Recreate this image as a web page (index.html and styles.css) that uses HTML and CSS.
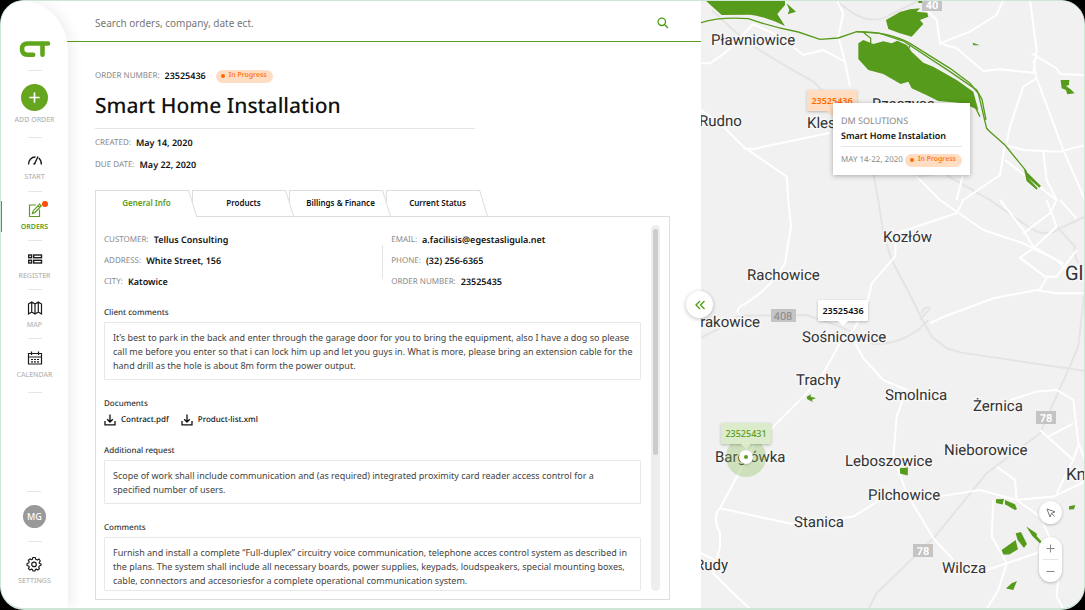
FILE: index.html
```html
<!DOCTYPE html>
<html lang="en">
<head>
<meta charset="utf-8">
<title>Smart Home Installation</title>
<link rel="stylesheet" href="styles.css">
</head>
<body>
<div class="shell">
  <aside class="sidebar">
    <a class="logo" href="#" aria-label="Home">
      <svg width="32" height="18" viewBox="0 0 32 18" fill="none" stroke="#5fa61c" stroke-width="4.600" stroke-linecap="round" stroke-linejoin="round"><path d="M29 3.500H8.500Q3 3.500 3 9T8.500 14.700H14.200"/><path d="M23.500 4V14.700"/></svg>
    </a>
    <button class="add" type="button"><span class="add-disc"><svg width="27" height="27" viewBox="0 0 27 27" stroke="#fff" stroke-width="1.700" stroke-linecap="round"><path d="M13.500 9v9M9 13.500h9"/></svg></span>Add order</button>
    <nav class="nav">
      <a class="nav-item nav-start" href="#"><svg width="16" height="16" viewBox="0 0 16 16" fill="none" stroke="#1c1c1c" stroke-width="1.400"><path d="M1.500 12.500C1.500 8.500 4 5 8.500 5M11.800 6C13.500 7.500 14.400 9.500 14.400 12.500M7.500 12L11 4.500"/><circle cx="7.300" cy="11.800" r="1" fill="#1c1c1c" stroke="none"/></svg>Start</a>
      <a class="nav-item is-active" href="#"><svg width="16" height="16" viewBox="0 0 16 16" fill="none" stroke="#5a9c1b" stroke-width="1.200"><path d="M9 3H2.500V14.500H12.500V7.500"/><path d="M5.500 11.500L6.300 8.700L12.500 2L14.300 3.700L8 10.500ZM11 3.700l1.800 1.700"/></svg>Orders<span class="dot"></span></a>
      <a class="nav-item" href="#"><svg width="16" height="16" viewBox="0 0 16 16" fill="none" stroke="#1c1c1c" stroke-width="1.400"><rect x="1.700" y="4" width="2.900" height="2.700"/><rect x="6.700" y="4" width="7.800" height="2.700"/><rect x="1.700" y="9.300" width="2.900" height="2.700"/><rect x="6.700" y="9.300" width="7.800" height="2.700"/></svg>Register</a>
      <a class="nav-item" href="#"><svg width="16" height="16" viewBox="0 0 16 16" fill="none" stroke="#1c1c1c" stroke-width="1.200"><path d="M1.500 4L4.700 2L8 4L11.300 2L14.500 4V14L11.300 12L8 14L4.700 12L1.500 14ZM4.700 2V12M8 4V14M11.300 2V12"/></svg>Map</a>
      <a class="nav-item nav-last" href="#"><svg width="16" height="16" viewBox="0 0 16 16" fill="none" stroke="#1c1c1c" stroke-width="1.200"><path d="M1.500 3.500H14.500V14H1.500ZM1.500 7H14.500M4.500 1.500V5M11.500 1.500V5M4 9.500H6M7 9.500H9M10 9.500H12M4 11.800H6M7 11.800H9M10 11.800H12"/></svg>Calendar</a>
    </nav>
    <div class="side-foot">
      <button class="avatar" type="button">MG</button>
      <a class="nav-item nav-settings" href="#"><svg width="16" height="16" viewBox="0 0 16 16" fill="none" stroke="#1c1c1c" stroke-width="1.200" stroke-linejoin="round"><path d="M6.800 1.500H9.200L9.700 3.300L11.400 4L13 3L14.300 5L13.200 6.500L13.600 7.400L15 8V9.300L13.300 10L12.800 11.200L13.400 12.800L11.700 14L10.300 13.100L9.400 13.500L9 15H7L6.500 13.500L5.500 13.100L4 14L2.400 12.600L3.200 11.100L2.700 10L1 9.500V7.500L2.700 7L3.200 5.800L2.400 4.200L4 2.900L5.500 3.700L6.400 3.300Z"/><circle cx="8" cy="8.400" r="2.300"/></svg>Settings</a>
    </div>
  </aside>

  <main class="main">
    <form class="search">
      <input class="search-input" type="search" aria-label="Search" placeholder="Search orders, company, date ect.">
      <button class="search-btn" type="submit" aria-label="Search"><svg width="12" height="12" viewBox="0 0 12 12" fill="none" stroke="#4c9a12" stroke-width="1.300"><circle cx="4.800" cy="4.800" r="3.700"/><path d="M7.500 7.500L11 11"/></svg></button>
    </form>
    <div class="content">
      <header class="order-head">
        <div class="field"><span class="key">Order number:</span><b class="val">23525436</b><span class="badge">In Progress</span></div>
        <h1 class="title">Smart Home Installation</h1>
        <div class="dates">
          <div class="field"><span class="key">Created:</span><b class="val">May 14, 2020</b></div>
          <div class="field"><span class="key">Due date:</span><b class="val">May 22, 2020</b></div>
        </div>
      </header>
      <div class="tabs" role="tablist">
        <button class="tab is-current" role="tab" type="button">General Info</button>
        <button class="tab" role="tab" type="button">Products</button>
        <button class="tab" role="tab" type="button">Billings &amp; Finance</button>
        <button class="tab" role="tab" type="button">Current Status</button>
      </div>
      <section class="panel">
        <div class="panel-body">
          <div class="facts">
            <div class="facts-col">
              <div class="field"><span class="key">Customer:</span><b class="val">Tellus Consulting</b></div>
              <div class="field"><span class="key">Address:</span><b class="val">White Street, 156</b></div>
              <div class="field"><span class="key">City:</span><b class="val">Katowice</b></div>
            </div>
            <div class="facts-col facts-second">
              <div class="field"><span class="key">Email:</span><b class="val">a.facilisis@egestasligula.net</b></div>
              <div class="field"><span class="key">Phone:</span><b class="val">(32) 256-6365</b></div>
              <div class="field"><span class="key">Order number:</span><b class="val">23525435</b></div>
            </div>
          </div>
          <div class="group">
            <label class="heading" for="client">Client comments</label>
            <textarea class="note note-full" id="client" rows="3" readonly>It’s best to park in the back and enter through the garage door for you to bring the equipment, also I have a dog so please call me before you enter so that i can lock him up and let you guys in. What is more, please bring an extension cable for the hand drill as the hole is about 8m form the power output.</textarea>
          </div>
          <div class="group">
            <h2 class="heading">Documents</h2>
            <div class="docs">
              <a class="doc" href="#"><svg width="12" height="12" viewBox="0 0 12 12" fill="none" stroke="#111" stroke-width="1.300"><path d="M1 7V10.800H11V7M6 .5V8M3.200 5.200L6 8L8.800 5.200"/></svg>Contract.pdf</a>
              <a class="doc" href="#"><svg width="12" height="12" viewBox="0 0 12 12" fill="none" stroke="#111" stroke-width="1.300"><path d="M1 7V10.800H11V7M6 .5V8M3.200 5.200L6 8L8.800 5.200"/></svg>Product-list.xml</a>
            </div>
          </div>
          <div class="group">
            <label class="heading" for="extra">Additional request</label>
            <textarea class="note" id="extra" rows="2" readonly>Scope of work shall include communication and (as required) integrated proximity card reader access control for a specified number of users.</textarea>
          </div>
          <div class="group">
            <label class="heading" for="comments">Comments</label>
            <textarea class="note note-last" id="comments" rows="3" readonly>Furnish and install a complete “Full-duplex” circuitry voice communication, telephone acces control system as described in the plans. The system shall include all necessary boards, power supplies, keypads, loudspeakers, special mounting boxes, cable, connectors and accesoriesfor a complete operational communication system.</textarea>
          </div>
        </div>
        <div class="track"><div class="thumb"></div></div>
      </section>
    </div>
  </main>

  <section class="map">
    <div class="map-canvas">
      <svg class="map-art" viewBox="701 1 384 607" preserveAspectRatio="xMinYMin slice">
        <g transform="translate(690 0) scale(.3333)">
          <g class="rail">
            <path d="M65 30L130 90L200 145L290 200L370 245L400 275M435 0L490 40Q550 75 600 45L690 0M550 520L565 600L580 700L605 780L650 865L690 945L725 1010L770 1045L815 1058L1185 1113"/>
            <path d="M680 530L760 520L900 600L1000 670Q1060 720 1110 685L1185 650M1100 680L1155 740Q1150 790 1185 800M33 1013L110 975L145 947L350 945L450 980L505 1005L540 1030Q620 1040 690 985L715 960M690 960L720 925Q705 915 695 940M1185 860L1165 1040L1095 1200L1050 1300L890 1420L735 1610L560 1780L535 1827"/>
          </g>
          <g class="road">
            <path d="M33 190H60L110 155L190 72M190 72L270 110L340 165L400 150L465 185L480 260M440 0L460 40L445 110L465 185M33 330L90 370L160 440L290 530L295 600L303 680L285 790Q240 870 150 920Q135 935 150 945M160 445L190 447L420 398M700 20L740 60L750 130L840 95L920 45L940 0M750 130L800 145L880 213L930 208L1030 218L1040 150L1020 0M1025 160L1100 205L1110 222L1185 225M1030 180L1040 235L1120 450L1185 600M1040 235L1000 260L960 380L950 430M945 435L1000 450L1110 455L1185 435M945 435L930 525L820 600L800 640L620 700L615 770L545 850L530 920L490 990L450 1030L400 1120L340 1190L240 1290M680 530L750 600L880 690L1000 730L1120 790M945 480L1100 600M1060 455L1070 540L1100 600L1080 640L1000 700M820 520L800 600M1070 600L1100 680L1030 745L990 773L1065 830L1100 830L1160 750M930 600L1000 690L1030 740L1100 780L1150 830M1110 600L1160 655M490 1020L520 1075L580 1140L650 1170L620 1250L610 1370L650 1480L730 1615L790 1680"/>
            <path d="M720 970L750 955L910 895L1040 870L1100 880H1185M1045 875L1070 835M240 1290L200 1320L90 1525Q65 1550 90 1600L90 1640L70 1720L130 1780L180 1827M33 1660L75 1680M90 1525L310 1573L490 1550L570 1500M745 1490L870 1470L980 1500L1090 1490L1185 1445M980 1500L975 1440L920 1400M980 1500L1050 1550L1110 1680L1100 1790L1120 1827M910 1500L905 1610L950 1690L1040 1660L1090 1615M890 1710L950 1690L925 1770L890 1827M960 1200L1040 1175L1100 1170L1150 1200L1165 1330L1185 1380M1050 1290L1150 1380L1100 1480M1150 1380L1165 1335M1075 1310L1150 1270"/>
          </g>
          <g class="park">
            <path d="M45 0L95 45L180 44Q220 48 285 78L262 42L285 15V0ZM290 10L318 35L293 43L298 30ZM588 60L630 36L660 28L690 25L680 35L712 38L715 50L690 60L700 72L665 110L625 98L595 87ZM505 130L520 120L550 132L580 124L605 130L622 122L650 135L665 155L700 188L730 200L800 240L850 275L865 330L820 310L745 303L715 288L665 265L655 245L632 252L580 222L535 210L505 177ZM848 128L870 136L850 136ZM1112 240H1138L1137 255L1128 258L1142 268L1154 280L1132 283L1128 270L1115 265ZM1002 508L1053 558L1048 563L1014 533L1043 565L1040 569L1010 543ZM350 1190L363 1183L362 1190L378 1194L365 1200L370 1207L352 1198ZM630 1405L654 1401L653 1427L630 1421ZM918 1498L942 1497L938 1514L918 1509ZM945 1500L975 1513L981 1528L975 1530L945 1513ZM1137 1519L1156 1515L1152 1528L1137 1529ZM935 1650L977 1620L984 1648L958 1664L940 1664ZM977 1600L993 1596L1011 1632L1002 1644L983 1620ZM1009 1580L1040 1601L1041 1610L1055 1625V1635L1027 1608ZM965 1750L981 1743L970 1770L948 1766ZM685 0H698V9H685Z"/>
          </g>
          <g class="river">
            <path d="M33 68Q90 50 175 56Q250 82 325 96L390 118L445 114L500 95Q600 96 660 130L780 205L840 250L865 280L890 385L900 395L945 435L1010 515"/>
            <path d="M500 95L570 100L640 123L780 215L860 270L876 298L888 360M520 97L542 115V130M660 133L655 150M870 350L850 310"/>
          </g>
        </g>
        <g class="shield">
          <rect x="922" y="-2" width="20" height="13"/><rect x="771" y="309" width="25" height="13"/><rect x="1036" y="411" width="20" height="13"/><rect x="913" y="544" width="20" height="13"/>
        </g>
        <g class="shield-no"><text x="932" y="9">40</text><text class="minor" x="783" y="320">408</text><text x="1046" y="422">78</text><text x="923" y="555">78</text></g>
        <g class="place">
          <text x="711" y="45">Pławniowice</text><text x="699" y="126">Rudno</text><text x="807" y="128">Kleszczów</text><text x="872" y="109">Rzeczyce</text>
          <text x="883" y="242">Kozłów</text><text x="747" y="280">Rachowice</text><text class="end" x="760" y="327">Sierakowice</text><text x="802" y="342">Sośnicowice</text>
          <text x="796" y="385">Trachy</text><text x="885" y="400">Smolnica</text><text x="973" y="411">Żernica</text><text x="944" y="455">Nieborowice</text>
          <text x="845" y="466">Leboszowice</text><text x="868" y="500">Pilchowice</text><text x="794" y="527">Stanica</text><text x="942" y="573">Wilcza</text>
          <text class="end" x="728" y="570">Rudy</text><text x="715" y="462">Bargłówka</text><text class="town" x="1066" y="480">Knurów</text><text class="city" x="1065" y="280">Gliwice</text>
        </g>
      </svg>
      <div class="halo"><span class="halo-dot"></span></div>
      <button class="pin pin-orange" type="button">23525436</button>
      <button class="pin pin-white" type="button">23525436</button>
      <button class="pin pin-green" type="button">23525431</button>
      <article class="card">
        <div class="card-client">DM SOLUTIONS</div>
        <div class="card-title">Smart Home Instalation</div>
        <div class="card-foot"><span>MAY 14-22, 2020</span><span class="badge">In Progress</span></div>
      </article>
      <div class="controls">
        <button class="locate" type="button" aria-label="Locate"><svg width="10" height="10" viewBox="0 0 10 10" fill="none" stroke="#777" stroke-width="1"><path d="M1 1L9 3.800L5.500 5.300L4 9ZM5.500 5.300L8.500 8.500"/></svg></button>
        <div class="zoom">
          <button class="zoom-btn" type="button" aria-label="Zoom in"><svg width="9" height="9" viewBox="0 0 9 9" stroke="#888"><path d="M4.500 .5v8M.5 4.500h8"/></svg></button>
          <button class="zoom-btn" type="button" aria-label="Zoom out"><svg width="9" height="9" viewBox="0 0 9 9" stroke="#888"><path d="M.5 4.500h8"/></svg></button>
        </div>
      </div>
    </div>
    <button class="collapse" type="button" aria-label="Expand map"><svg width="10" height="10" viewBox="0 0 10 10" fill="none" stroke="#4c9a12" stroke-width="1.300"><path d="M5 1L1 5L5 9M9.500 1L5.500 5L9.500 9"/></svg></button>
  </section>
</div>
</body>
</html>
```
FILE: styles.css
```css
* { box-sizing: border-box; }
body {
  margin: 0;
  background: #000;
  color: #111;
  font: 500 9px/14px "Noto Sans", "Open Sans", sans-serif;
  text-rendering: geometricPrecision;
}
button, input, textarea { font: inherit; color: inherit; border: 0; padding: 0; margin: 0; background: none; }
button { cursor: pointer; }
a { color: inherit; text-decoration: none; }
h1, h2 { margin: 0; }

.shell {
  display: grid;
  grid-template-columns: 67px minmax(0, 633fr) minmax(0, 383fr);
  min-height: 100vh;
  border: 1px solid #cde6d6;
  border-bottom-width: 2px;
  border-radius: 24px;
  background: #fff;
  overflow: hidden;
}

/* Sidebar */
.sidebar {
  z-index: 1;
  display: flex;
  flex-direction: column;
  align-items: center;
  padding-top: 39px;
  background: #fff;
  border-top-right-radius: 46px 50px;
  box-shadow: 4px 0 14px rgba(0, 0, 0, .07);
}
.logo { display: block; height: 31px; }
.logo svg, .add svg { display: block; }
.logo::after, .add::after, .nav-item::after, .side-foot::before, .avatar::after {
  content: "";
  display: block;
  width: 14px;
  height: 1px;
  background: #e6e6e6;
}
.logo::after { margin: 12px auto 0; }
.add {
  display: flex;
  flex-direction: column;
  align-items: center;
  padding-top: 13px;
  font-size: 7px;
  line-height: 14px;
  color: #b5b5b5;
  text-transform: uppercase;
}
.add-disc { margin-bottom: 2px; border-radius: 50%; background: #66a61e; }
.add::after { margin-top: 10px; }
.nav { align-self: stretch; }
.nav-item {
  position: relative;
  display: flex;
  flex-direction: column;
  align-items: center;
  height: 49px;
  padding-top: 10px;
  font-size: 7px;
  line-height: 14px;
  color: #b5b5b5;
  text-transform: uppercase;
}
.nav-item svg { margin-bottom: 3px; }
.nav-item::after { margin-top: auto; }
.nav-start { height: 54px; padding-top: 14px; }
.nav-last { height: 54px; padding-top: 11px; }
.is-active { color: #5a9c1b; font-weight: 600; }
.is-active::before {
  content: "";
  position: absolute;
  left: 0;
  top: 9px;
  width: 1px;
  height: 31px;
  background: #5a9c1b;
}
.dot { position: absolute; top: 9px; left: 41px; width: 6px; height: 6px; border-radius: 50%; background: #ff4a0a; }
.side-foot { display: flex; flex-direction: column; align-items: center; margin-top: auto; padding-bottom: 18px; }
.avatar {
  position: relative;
  width: 23px;
  height: 23px;
  margin: 13px 0 14px;
  border-radius: 50%;
  background: #999;
  color: #fff;
}
.avatar::after { position: absolute; top: 36px; left: 5px; }
.nav-settings { height: 48px; padding-top: 14px; }
.nav-settings::after { display: none; }

/* Main column */
.main { display: flex; flex-direction: column; min-width: 0; }
.search {
  display: flex;
  align-items: center;
  height: 41px;
  margin-left: -2px;
  padding: 3px 32px 0 29px;
  border-bottom: 1px solid #5a9c1b;
}
.search-input { flex: 1; font-size: 10px; font-weight: 400; outline: 0; }
.search-input::placeholder { color: #777; opacity: 1; }
.search-btn svg { display: block; }
.content { flex: 1; display: flex; flex-direction: column; padding: 27px 31px 8px 27px; }
.field { display: flex; align-items: center; gap: 5px; height: 14px; }
.key { font-size: 8px; font-weight: 400; color: #888; text-transform: uppercase; }
.val { font-weight: 600; }
.badge {
  display: flex;
  align-items: center;
  gap: 4px;
  height: 13px;
  padding: 0 6px 0 5px;
  border-radius: 7px;
  background: #ffddc2;
  color: #ff6a00;
  font-size: 7px;
  font-weight: 500;
}
.badge::before { content: ""; width: 4px; height: 4px; border-radius: 50%; background: currentColor; }
.order-head .badge { margin-left: 5px; }
.title { padding-top: 8px; font-size: 21px; font-weight: 500; line-height: 30px; }
.dates {
  display: flex;
  flex-direction: column;
  gap: 8px;
  width: 66%;
  margin-top: 7px;
  padding-top: 7px;
  border-top: 1px solid #e6e6e6;
}

/* Tabs */
.tabs { display: flex; margin-top: 18px; isolation: isolate; }
.tab {
  position: relative;
  isolation: isolate;
  width: 103px;
  height: 26px;
  margin-right: -6px;
  font-size: 8px;
  font-weight: 600;
}
.tab::before, .tab::after {
  content: "";
  position: absolute;
  z-index: -1;
  top: 0;
  bottom: 0;
  background: #fff;
  border-top: 1px solid #ddd;
}
.tab::before { left: 0; right: 30px; border-left: 1px solid #ddd; }
.tab::after { right: 9px; width: 40px; border-right: 1px solid #ddd; transform: skewX(17deg); transform-origin: top; }
.tab:nth-child(1) { z-index: 4; }
.tab:nth-child(2) { z-index: 3; }
.tab:nth-child(3) { z-index: 2; }
.tab:nth-child(4) { z-index: 1; }
.is-current { color: #5a9c1b; }
.is-current::before, .is-current::after { bottom: -1px; }

/* Order details */
.panel {
  flex: 1;
  display: flex;
  gap: 10px;
  padding: 8px 9px 8px 8px;
  border: 1px solid #ddd;
}
.panel-body { flex: 1; min-width: 0; padding-top: 8px; }
.facts { display: grid; grid-template-columns: 52% 1fr; }
.facts-col { display: flex; flex-direction: column; gap: 7px; }
.facts-second { position: relative; padding-left: 8px; }
.facts-second::before { content: ""; position: absolute; left: -1px; top: 12px; width: 1px; height: 34px; background: #e6e6e6; }
.group { margin-top: 17px; }
.heading { display: block; font-size: 8px; font-weight: 500; line-height: 14px; color: #333; }
.note {
  display: block;
  width: 100%;
  margin-top: 2px;
  padding: 8px 8px 6px;
  border: 1px solid #e8e8e8;
  border-radius: 1px;
  font-size: 9px;
  font-weight: 400;
  line-height: 14px;
  color: #444;
  outline: 0;
  resize: none;
  overflow: hidden;
}
.note-full { padding-right: 3px; }
.note-last { padding-bottom: 2px; }
.docs { display: flex; gap: 12px; margin-top: 2px; }
.doc { display: flex; align-items: center; gap: 5px; font-size: 8px; }
.track { width: 9px; padding: 4px 2px; border-radius: 5px; background: #eee; }
.thumb { height: 63%; border-radius: 3px; background: #ccc; }

/* Map */
.map { position: relative; }
.map-canvas { position: relative; height: 100%; overflow: hidden; background: #f1f1f1; }
.map-art { position: absolute; inset: 0; width: 100%; height: 100%; }
.rail { fill: none; stroke: #e4e4e4; stroke-width: 6; }
.road { fill: none; stroke: #fff; stroke-width: 6; stroke-linejoin: round; }
.park { fill: #579b1c; }
.river { fill: none; stroke: #579b1c; stroke-width: 4; }
.shield { fill: #c4c4c4; }
.shield-no { fill: #fff; font: 700 11px Roboto, sans-serif; text-anchor: middle; }
.minor { fill: #888; font-weight: 400; }
.place { fill: #333; stroke: #f7f7f7; stroke-width: 3px; paint-order: stroke; font: 400 15px Roboto, sans-serif; }
.end { text-anchor: end; }
.town { font-size: 17px; }
.city { font-size: 20px; }
.pin {
  position: absolute;
  width: 50px;
  height: 21px;
  border-radius: 1px;
  font-weight: 600;
  box-shadow: 0 1px 3px rgba(0, 0, 0, .25);
}
.pin::after {
  content: "";
  position: absolute;
  top: 100%;
  left: 20px;
  border: 5px solid transparent;
  border-bottom: 0;
  border-top-color: inherit;
}
.pin-orange { left: 106px; top: 89px; background: #ffddc2; border-color: #ffddc2; color: #ff6a00; }
.pin-white { left: 117px; top: 299px; background: #fff; border-color: #fff; }
.pin-green { left: 20px; top: 422px; background: #dcebcb; border-color: #dcebcb; color: #5a9c1b; font-weight: 500; }
.halo {
  position: absolute;
  left: 25px;
  top: 436px;
  display: grid;
  place-items: center;
  width: 40px;
  height: 40px;
  border-radius: 50%;
  background: rgba(140, 190, 90, .35);
}
.halo-dot { width: 14px; height: 14px; border: 5px solid #fff; border-radius: 50%; background: #5a9c1b; box-shadow: 0 1px 2px rgba(0, 0, 0, .2); }
.card {
  position: absolute;
  left: 132px;
  top: 102px;
  width: 137px;
  padding: 11px 8px 8px;
  background: #fff;
  box-shadow: 0 1px 5px rgba(0, 0, 0, .3);
}
.card-client { font-weight: 400; color: #888; }
.card-title { padding: 1px 0 3px; font-weight: 600; border-bottom: 1px solid #e6e6e6; }
.card-foot { display: flex; align-items: center; justify-content: space-between; margin-top: 6px; font-size: 8px; font-weight: 400; color: #888; white-space: nowrap; }
.controls { position: absolute; right: 22px; bottom: 26px; display: flex; flex-direction: column; gap: 13px; }
.locate, .zoom { width: 23px; border-radius: 12px; background: #fff; box-shadow: 0 1px 3px rgba(0, 0, 0, .25); }
.locate { display: grid; place-items: center; height: 23px; }
.zoom { display: flex; flex-direction: column; align-items: center; }
.zoom-btn { display: grid; place-items: center; width: 15px; height: 22px; }
.zoom-btn + .zoom-btn { border-top: 1px solid #e6e6e6; height: 23px; }
.collapse {
  position: absolute;
  left: -15px;
  top: 290px;
  display: grid;
  place-items: center;
  width: 27px;
  height: 27px;
  border-radius: 50%;
  background: #fff;
  box-shadow: 0 1px 4px rgba(0, 0, 0, .25);
}
```
